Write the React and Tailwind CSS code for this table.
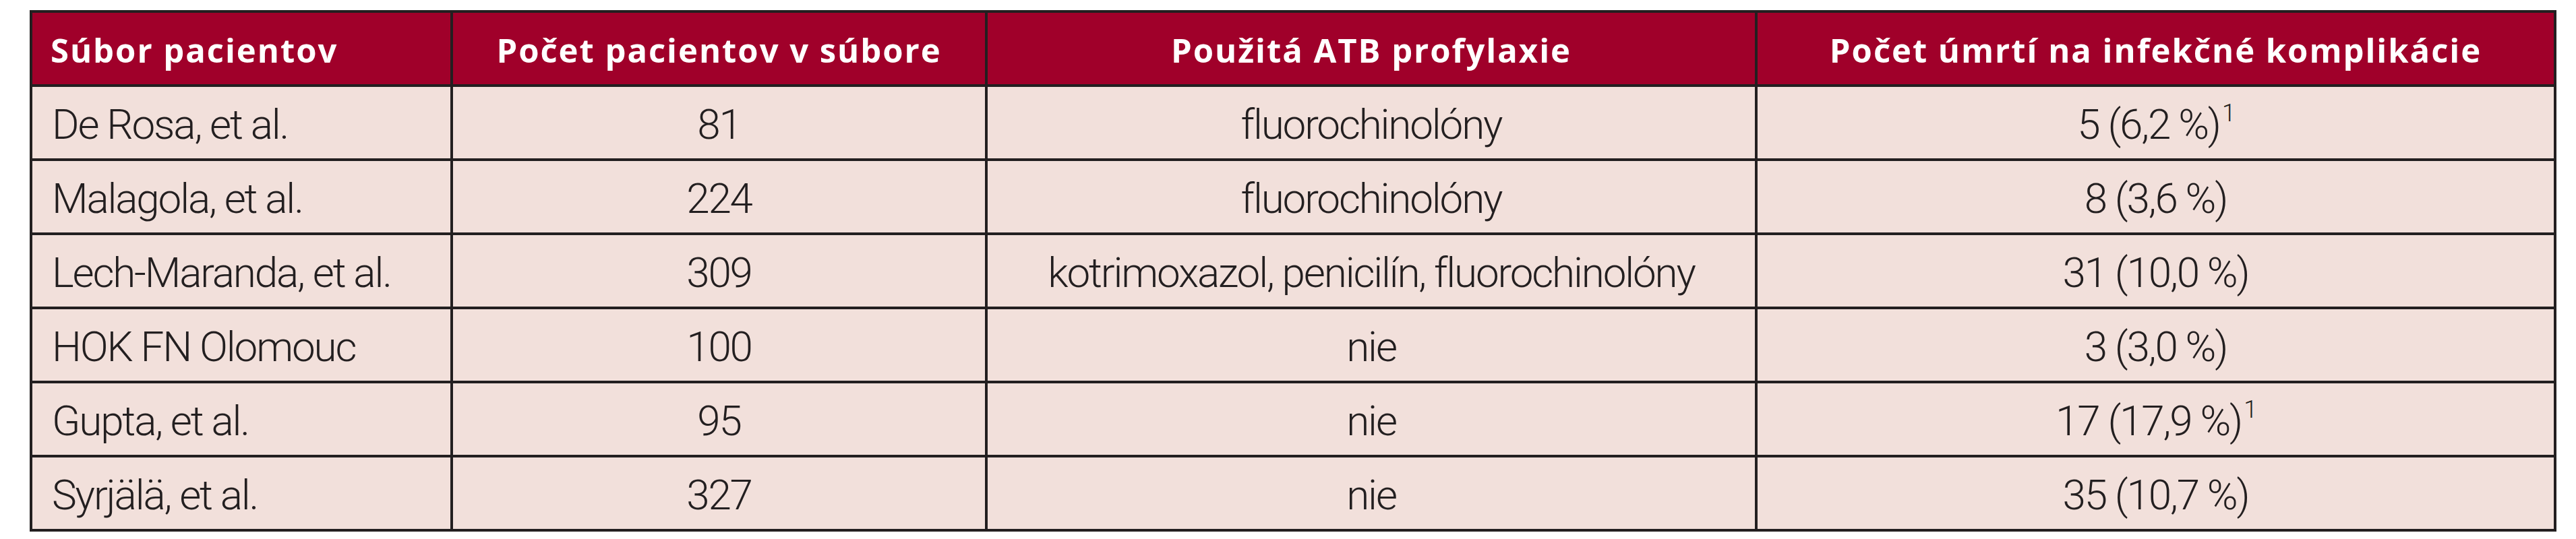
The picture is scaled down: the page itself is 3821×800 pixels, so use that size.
import React from "react";

const headers = [
  "Súbor pacientov",
  "Počet pacientov v súbore",
  "Použitá ATB profylaxie",
  "Počet úmrtí na infekčné komplikácie",
];

const rows = [
  { group: "De Rosa, et al.", count: "81", atb: "fluorochinolóny", deaths: "5 (6,2 %)", note: true },
  { group: "Malagola, et al.", count: "224", atb: "fluorochinolóny", deaths: "8 (3,6 %)" },
  { group: "Lech-Maranda, et al.", count: "309", atb: "kotrimoxazol, penicilín, fluorochinolóny", deaths: "31 (10,0 %)" },
  { group: "HOK FN Olomouc", count: "100", atb: "nie", deaths: "3 (3,0 %)" },
  { group: "Gupta, et al.", count: "95", atb: "nie", deaths: "17 (17,9 %)", note: true },
  { group: "Syrjälä, et al.", count: "327", atb: "nie", deaths: "35 (10,7 %)" },
];

// same column template for header and body rows
const cols = "grid grid-cols-[620px_793px_1142px_1185px]";

const HeadCell = ({ children, first }) => (
  <div
    className={
      "flex h-[106px] items-center bg-[#a0002a] pt-[6px] font-['Open_Sans',sans-serif] text-[49px] font-bold tracking-[0.04em] text-white " +
      (first ? "pl-[27px]" : "justify-center border-l-4 border-[#231f20]")
    }
  >
    {children}
  </div>
);

const BodyCell = ({ children, first }) => (
  <div
    className={
      "flex h-[106px] items-center pt-[4px] font-['Roboto',sans-serif] text-[62px] font-light tracking-[-0.035em] text-[#231f20] " +
      (first ? "pl-[29px]" : "justify-center border-l-4 border-[#231f20]")
    }
  >
    {children}
  </div>
);

export default function App() {
  return (
    <div className="min-h-[800px] w-[3821px] bg-white pl-[44px] pt-[15px]">
      <div className="w-[3748px] border-4 border-[#231f20] bg-[#f2e0db]">
        {/* header */}
        <div className={cols}>
          {headers.map((h, i) => (
            <HeadCell key={h} first={i === 0}>
              {h}
            </HeadCell>
          ))}
        </div>

        {rows.map((r) => (
          <div key={r.group} className={cols + " border-t-4 border-[#231f20]"}>
            <BodyCell first>{r.group}</BodyCell>
            <BodyCell>{r.count}</BodyCell>
            <BodyCell>{r.atb}</BodyCell>
            <BodyCell>
              <span>
                {r.deaths}
                {/* footnote mark sits up at cap height */}
                {r.note && <sup className="top-[-26px] ml-[3px] text-[36px]">1</sup>}
              </span>
            </BodyCell>
          </div>
        ))}
      </div>
    </div>
  );
}
